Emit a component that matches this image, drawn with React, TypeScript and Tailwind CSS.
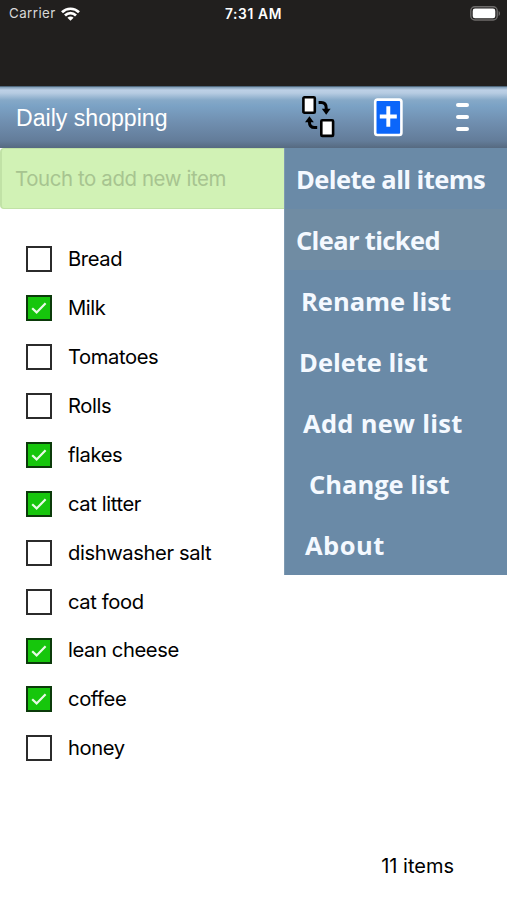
import React, { useState } from "react";

type Item = { name: string; ticked: boolean };

const initialItems: Item[] = [
  { name: "Bread", ticked: false },
  { name: "Milk", ticked: true },
  { name: "Tomatoes", ticked: false },
  { name: "Rolls", ticked: false },
  { name: "flakes", ticked: true },
  { name: "cat litter", ticked: true },
  { name: "dishwasher salt", ticked: false },
  { name: "cat food", ticked: false },
  { name: "lean cheese", ticked: true },
  { name: "coffee", ticked: true },
  { name: "honey", ticked: false },
];

const menuItems = [
  { label: "Delete all items", className: "pl-[11px] tracking-[-0.6px]" },
  { label: "Clear ticked", className: "pl-[11px] tracking-[-0.65px] bg-[#708ca3]" },
  { label: "Rename list", className: "pl-[16px]" },
  { label: "Delete list", className: "pl-[14px]" },
  { label: "Add new list", className: "pl-[18px] tracking-[0.3px]" },
  { label: "Change list", className: "pl-[24px]" },
  { label: "About", className: "pl-[20px] tracking-[0.5px]" },
];

const StatusBar = () => (
  <div className="relative h-[86px] bg-[#211f1e] text-white">
    <div className="flex h-[27px] items-center justify-between pl-[9px] pr-[6px]">
      <div className="flex items-center gap-[5px]">
        <span className="pt-px text-[13.3px] tracking-[0.45px] text-[#d8d8d8]">Carrier</span>
        <svg width="19" height="14" viewBox="0 0 19 14" fill="none" stroke="#fff" strokeWidth="2.7">
          <path d="M1 5.2C5.7.6 13.3.6 18 5.2" />
          <path d="M4 8.5c3.1-3.1 7.9-3.1 11 0" />
          <path d="M9.5 13.8 6.4 10.8c1.8-1.6 4.4-1.6 6.2 0z" fill="#fff" stroke="none" />
        </svg>
      </div>
      <svg width="31" height="15" viewBox="0 0 31 15">
        <rect x="0.8" y="0.8" width="26.4" height="13.2" rx="4" fill="none" stroke="#6d6b6a" strokeWidth="1.4" />
        <rect x="2.7" y="2.6" width="22.6" height="9.6" rx="2.3" fill="#fff" />
        <path d="M28.6 5v5c1.9-.8 1.9-4.2 0-5z" fill="#6d6b6a" />
      </svg>
    </div>
    <span className="absolute inset-x-0 top-0 text-center text-[13.8px] leading-[28px] font-semibold tracking-[0.6px]">
      7:31 AM
    </span>
  </div>
);

const Header = () => (
  <header className="flex h-[62px] items-center border-t border-[#50687d] bg-[linear-gradient(to_bottom,#7d9ab4_0px,#bdd0e6_3px,#b7cce2_6px,#86a9c8_13px,#7ba2c5_19px,#708fb0_35px,#637c99_54px,#566a80_61px)] pl-[16px]">
    <h1 className="w-[286px] pt-px font-['Liberation_Sans'] text-[23.1px] text-white">Daily shopping</h1>
    <button aria-label="Swap lists" className="w-[71px] pb-[2px]">
      <svg width="34" height="42" viewBox="0 0 34 42" fill="none" stroke="#000" strokeWidth="2.6">
        <rect x="1.4" y="1.3" width="11.4" height="15.4" rx="1" fill="#fff" />
        <rect x="19.3" y="24.3" width="11.8" height="15.6" rx="1" fill="#fff" />
        <path d="M16.6 6.4h2.6c3.4 0 5 2 5 5.6v1.5" strokeWidth="3" />
        <path d="M19.8 12.8h8.8l-4.4 6z" fill="#000" stroke="none" />
        <path d="M15.2 31.6h-2.6c-3.6 0-5.2-2-5.2-5.6v-1" strokeWidth="3" />
        <path d="M3 26.2h8.8l-4.4-6z" fill="#000" stroke="none" />
      </svg>
    </button>
    <button aria-label="Add" className="w-[83px]">
      <svg width="30" height="39" viewBox="0 0 30 39">
        <rect x="2.2" y="1.6" width="26.2" height="35.4" rx="2.2" fill="#0b66fa" stroke="#fff" strokeWidth="2.6" />
        <path d="M15.3 8.3v20.4M6.8 18.5h17" stroke="#fff" strokeWidth="3.9" />
      </svg>
    </button>
    <button aria-label="Menu" className="flex flex-col gap-[8px] pb-[2px]">
      <span className="h-[4px] w-[13px] rounded-full bg-white" />
      <span className="h-[4px] w-[13px] rounded-full bg-white" />
      <span className="h-[4px] w-[13px] rounded-full bg-white" />
    </button>
  </header>
);

const App = () => {
  const [items, setItems] = useState<Item[]>(initialItems);

  const toggle = (index: number) => {
    setItems(items.map((item, i) => (i === index ? { ...item, ticked: !item.ticked } : item)));
  };

  return (
    <div className="relative flex h-[900px] w-[507px] flex-col overflow-hidden bg-white font-['Inter',sans-serif] text-black">
      <StatusBar />
      <Header />

      <input
        type="text"
        placeholder="Touch to add new item"
        className="h-[61px] w-full rounded-[4px] border border-l-2 border-[#c1e2a6] bg-[#d1f2b5] pl-[13px] text-[20.4px] tracking-[-0.38px] placeholder:text-[#a7c490] focus:outline-none"
      />

      <ul className="mt-[26px] flex flex-col">
        {items.map((item, i) => (
          <li key={item.name} className="flex h-[48.9px] items-center gap-[16px] pl-[26px]" onClick={() => toggle(i)}>
            <span
              className={`flex size-[26px] items-center justify-center border-2 ${
                item.ticked ? "border-[#0b3a0a] bg-[#16c60c]" : "border-[#2b2b2b] bg-white"
              }`}
            >
              {item.ticked && (
                <svg width="16" height="12" viewBox="0 0 16 12" fill="none" stroke="#e9fbe6" strokeWidth="2.2">
                  <path d="M1.2 6.2 5.6 10.4 14.6 1.2" />
                </svg>
              )}
            </span>
            <span className="text-[20.2px] tracking-[-0.4px]">{item.name}</span>
          </li>
        ))}
      </ul>

      {/* Item counter */}
      <p className="mt-auto mb-[19px] pr-[53px] text-right text-[20px]">{items.length} items</p>

      {/* Dropdown menu */}
      <nav className="absolute top-[148px] right-0 flex h-[427px] w-[223px] flex-col border-l border-[#7f9ab1] bg-[#6a8aa7]">
        {menuItems.map((entry) => (
          <button
            key={entry.label}
            className={`flex-1 pt-[3px] text-left font-['Open_Sans'] text-[25.5px] leading-none font-bold whitespace-nowrap text-[#f4f9ff] ${entry.className}`}
          >
            {entry.label}
          </button>
        ))}
      </nav>
    </div>
  );
};

export default App;
